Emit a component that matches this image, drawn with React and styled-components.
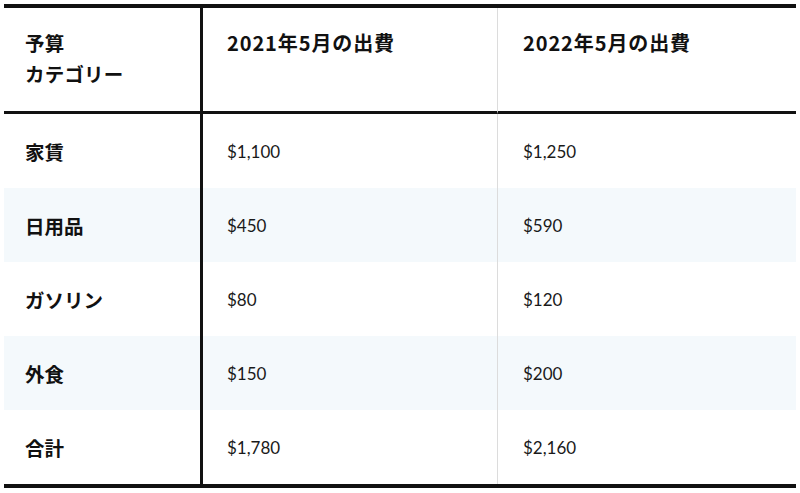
import React from "react";
import styled, { createGlobalStyle } from "styled-components";

const Global = createGlobalStyle`
  html, body { margin: 0; padding: 0; background: #fff; }
  body { font-family: "Noto Sans CJK JP", "Noto Sans", sans-serif; color: #111; }
`;

const Wrap = styled.div`
  padding: 4px 4px 0 4px;
  width: 792px;
`;

const Table = styled.div`
  display: grid;
  grid-template-columns: 199px 295px 298px;
  border-top: 4px solid #111;
  border-bottom: 4px solid #111;
`;

const Cell = styled.div`
  box-sizing: border-box;
  display: flex;
  align-items: ${(p) => (p.$head ? "flex-start" : "center")};
  height: ${(p) => (p.$head ? "106px" : "74px")};
  padding: ${(p) => (p.$head ? "19px 0 0 21px" : "0 0 0 21px")};
  background: ${(p) => (p.$stripe ? "#f4f9fc" : "#fff")};
  border-right: ${(p) =>
    p.$col === 0 ? "3px solid #111" : p.$col === 1 ? "1px solid #dcdcdc" : "none"};
  border-bottom: ${(p) => (p.$head ? "3px solid #111" : "none")};
  padding-left: ${(p) => (p.$col === 0 ? "21px" : p.$col === 1 ? "24px" : "25px")};
`;

const HeadText = styled.span`
  font-family: "Noto Sans CJK JP", sans-serif;
  font-weight: 700;
  font-size: 19.5px;
  line-height: 31px;
  letter-spacing: 0.2px;
`;

const YearText = styled(HeadText)`
  font-size: 20px;
  letter-spacing: 0.9px;
`;

const CatText = styled.span`
  font-family: "Noto Sans CJK JP", sans-serif;
  font-weight: 700;
  font-size: 19.5px;
`;

const Amount = styled.span`
  font-family: Lato, "Noto Sans", sans-serif;
  font-size: 17px;
  color: #1a1a1a;
`;

const rows = [
  ["家賃", "$1,100", "$1,250"],
  ["日用品", "$450", "$590"],
  ["ガソリン", "$80", "$120"],
  ["外食", "$150", "$200"],
  ["合計", "$1,780", "$2,160"],
];

export default function App() {
  return (
    <Wrap>
      <Global />
      <Table>
        <Cell $head $col={0}>
          <HeadText>
            予算
            <br />
            カテゴリー
          </HeadText>
        </Cell>
        <Cell $head $col={1}>
          <YearText>2021年5月の出費</YearText>
        </Cell>
        <Cell $head $col={2}>
          <YearText>2022年5月の出費</YearText>
        </Cell>
        {rows.map((r, i) => (
          <React.Fragment key={r[0]}>
            <Cell $col={0} $stripe={i % 2 === 1}>
              <CatText>{r[0]}</CatText>
            </Cell>
            <Cell $col={1} $stripe={i % 2 === 1}>
              <Amount>{r[1]}</Amount>
            </Cell>
            <Cell $col={2} $stripe={i % 2 === 1}>
              <Amount>{r[2]}</Amount>
            </Cell>
          </React.Fragment>
        ))}
      </Table>
    </Wrap>
  );
}
